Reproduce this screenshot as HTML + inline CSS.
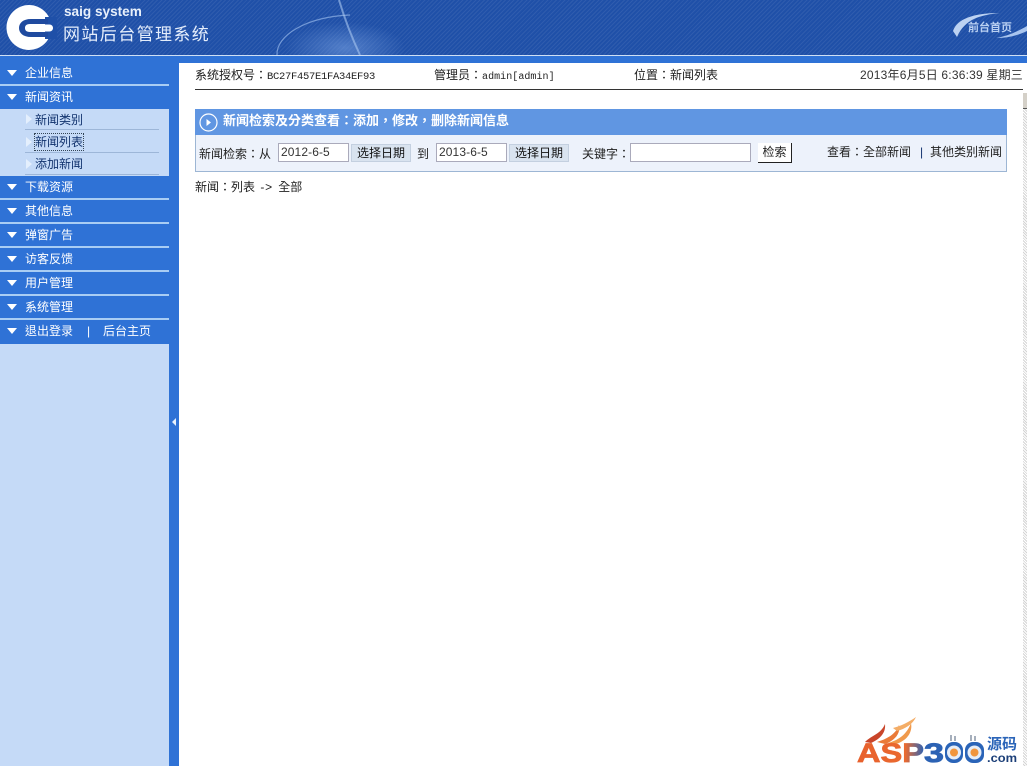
<!DOCTYPE html>
<html lang="zh-Hant">
<head>
<meta charset="utf-8">
<title>网站后台管理系统</title>
<style>
html,body{margin:0;padding:0;width:1027px;height:766px;overflow:hidden;background:#fff}
body{position:relative;font:12px/16px "Liberation Sans","Noto Sans CJK TC",sans-serif;color:#222}
.a{position:absolute;white-space:nowrap}
#hd{left:0;top:0;width:1027px;height:55px;background:#1f50a8;background-image:repeating-linear-gradient(135deg,rgba(255,255,255,.07) 0 1px,transparent 1px 3px)}
#wl{left:0;top:55px;width:1027px;height:1px;background:#cfe0f5}
#bl{left:0;top:56px;width:1027px;height:7px;background:#2f72d6}
#sb{left:0;top:63px;width:169px;height:703px;background:#c5daf7}
#st{left:169px;top:63px;width:10px;height:703px;background:#2f72d6}
.m{position:absolute;left:0;width:169px;height:22px;background:#2f72d6;color:#fff;line-height:22px;border-bottom:2px solid #a9cdf4}
.m span{position:absolute;left:25px;top:0}
.m i{position:absolute;left:7px;top:8px;width:0;height:0;border-left:5px solid transparent;border-right:5px solid transparent;border-top:6px solid #fff}
.s{position:absolute;left:25px;width:134px;height:21px;border-bottom:1px solid #9db6d8;color:#12336e;line-height:16px}
.s span{position:absolute;left:10px}
.s i{position:absolute;left:1px;top:6px;width:0;height:0;border-top:5px solid transparent;border-bottom:5px solid transparent;border-left:6px solid #e4effd}
.in{position:absolute;box-sizing:border-box;height:19px;border:1px solid #aab;background:#fff;color:#333;padding-left:2px;line-height:17px;letter-spacing:.1px}
.bt{position:absolute;box-sizing:border-box;height:18px;background:#d9e3ef;border:1px solid #c4d0e0;color:#111;text-align:center;line-height:16px}
</style>
</head>
<body>
<div class="a" id="hd"></div>
<svg class="a" style="left:0;top:0" width="1027" height="56" viewBox="0 0 1027 56">
  <defs>
    <radialGradient id="gl" cx="50%" cy="50%" r="50%"><stop offset="0" stop-color="#7ba4e4" stop-opacity=".55"/><stop offset="1" stop-color="#7ba4e4" stop-opacity="0"/></radialGradient>
  </defs>
  <ellipse cx="345" cy="48" rx="60" ry="26" fill="url(#gl)"/>
  <path d="M277 55C276 36 305 17 350 15" fill="none" stroke="#9dbdec" stroke-width="1.200" opacity=".65"/>
  <path d="M339 0C345 20 352 38 360 55" fill="none" stroke="#a8c6f0" stroke-width="2" opacity=".6"/>
  <circle cx="29" cy="27.500" r="22.500" fill="#fff"/>
  <rect x="45" y="17" width="12" height="22" fill="#1f50a8"/>
  <path d="M48 19H31C23 19 19 23 19 28C19 33 23 37 31 37H48V32H30C26 32 25 30 25 28C25 26 26 24 30 24H48Z" fill="#1f4a9f"/>
  <path d="M30 24.500H49.500C51.500 24.500 53 26 53 28C53 30 51.500 31.500 49.500 31.500H30Z" fill="#fff"/>
  <path d="M953 31C957 19 973 13 1000 13C980 15 965 19 957 37Z" fill="#bcd2f2"/>
  <path d="M996 38C1009 36 1020 30 1027 26V31C1017 36 1006 38 996 38Z" fill="#a9c5ef"/>
</svg>
<div class="a" style="left:64px;top:4px;font:bold 13.600px/16px 'Liberation Sans',sans-serif;color:#e8f0fb">saig system</div>
<div class="a" style="left:63px;top:24px;font-size:17px;line-height:21px;letter-spacing:1.400px;color:#e4edfb">网站后台管理系统</div>
<div class="a" style="left:968px;top:21px;font-size:11px;line-height:14px;font-weight:bold;color:#b9d0f2">前台首页</div>
<div class="a" id="wl"></div>
<div class="a" id="bl"></div>
<div class="a" id="sb"></div>
<div class="a" id="st"></div>
<svg class="a" style="left:171px;top:418px" width="6" height="8"><path d="M1 4L5 0V8Z" fill="#e6f0fc"/></svg>

<div class="m" style="top:62px"><i></i><span>企业信息</span></div>
<div class="m" style="top:86px;height:23px;border-bottom:0"><i></i><span>新闻资讯</span></div>
<div class="s" style="top:108px"><i></i><span style="top:4px">新闻类别</span></div>
<div class="s" style="top:131px"><i></i><span style="top:3px;outline:1px dotted #345">新闻列表</span></div>
<div class="s" style="top:153px"><i></i><span style="top:3px">添加新闻</span></div>
<div class="m" style="top:176px"><i></i><span>下载资源</span></div>
<div class="m" style="top:200px"><i></i><span>其他信息</span></div>
<div class="m" style="top:224px"><i></i><span>弹窗广告</span></div>
<div class="m" style="top:248px"><i></i><span>访客反馈</span></div>
<div class="m" style="top:272px"><i></i><span>用户管理</span></div>
<div class="m" style="top:296px"><i></i><span>系统管理</span></div>
<div class="m" style="top:320px;border-bottom:0;height:24px"><i></i><span>退出登录</span><span style="left:87px">|</span><span style="left:103px">后台主页</span></div>

<div class="a" style="left:195px;top:67px">系统授权号：<span style="font:10.500px/16px 'Liberation Mono',monospace;letter-spacing:-.3px">BC27F457E1FA34EF93</span></div>
<div class="a" style="left:434px;top:67px">管理员：<span style="font:10px/16px 'Liberation Mono',monospace;letter-spacing:.05px">admin[admin]</span></div>
<div class="a" style="left:634px;top:67px">位置：新闻列表</div>
<div class="a" style="right:4px;top:67px;letter-spacing:.2px;color:#333">2013年6月5日 6:36:39 星期三</div>
<div class="a" style="left:195px;top:89px;width:828px;height:1px;background:#333"></div>

<div class="a" style="left:1023px;top:93px;width:4px;height:673px;background:#e4e4e4;background-image:repeating-linear-gradient(45deg,#fff 0 1px,#d4d4d4 1px 2px)"></div>
<div class="a" style="left:1023px;top:93px;width:4px;height:16px;background:#d4d0c8;border-bottom:1px solid #555;box-sizing:border-box"></div>

<div class="a" style="left:195px;top:109px;width:812px;height:26px;background:#6096e2"></div>
<svg class="a" style="left:199px;top:113px" width="19" height="19"><circle cx="9.500" cy="9.500" r="8.500" fill="none" stroke="#fff" stroke-width="1.200"/><path d="M7.500 6L12 9.500L7.500 13Z" fill="#fff"/></svg>
<div class="a" style="left:223px;top:113px;color:#fff;font-weight:bold;font-size:13px">新闻检索及分类查看：添加，修改，删除新闻信息</div>
<div class="a" style="left:195px;top:135px;width:812px;height:37px;box-sizing:border-box;background:#edf2fb;border:1px solid #9db6d4;border-top:0"></div>

<div class="a" style="left:199px;top:146px">新闻检索：从</div>
<div class="in" style="left:278px;top:143px;width:71px">2012-6-5</div>
<div class="bt" style="left:351px;top:144px;width:60px">选择日期</div>
<div class="a" style="left:417px;top:146px">到</div>
<div class="in" style="left:436px;top:143px;width:71px">2013-6-5</div>
<div class="bt" style="left:509px;top:144px;width:60px">选择日期</div>
<div class="a" style="left:582px;top:146px">关键字：</div>
<div class="in" style="left:630px;top:143px;width:121px"></div>
<div class="a" style="left:758px;top:143px;width:34px;height:20px;box-sizing:border-box;border-right:1px solid #222;border-bottom:1px solid #222;text-align:center;line-height:18px;background:#fff">检索</div>
<div class="a" style="left:827px;top:144px">查看：全部新闻</div>
<div class="a" style="left:920px;top:144px;color:#12336e">|</div>
<div class="a" style="left:930px;top:144px">其他类别新闻</div>

<div class="a" style="left:195px;top:179px;word-spacing:2px">新闻：列表 <span style="letter-spacing:.8px">-&gt;</span> 全部</div>

<svg class="a" style="left:855px;top:712px" width="168" height="54" viewBox="0 0 168 54">
  <defs>
    <linearGradient id="lg" x1="0" y1="0" x2="1" y2="0"><stop offset="0" stop-color="#e8602c"/><stop offset=".72" stop-color="#ea6a30"/><stop offset="1" stop-color="#2c62b4"/></linearGradient>
  </defs>
  <path d="M10 30C17 23 26 22 30 12C31 21 25 27 16 31Z" fill="#c9452a"/>
  <path d="M22 30C32 27 41 22 44 13C46 22 39 29 30 32Z" fill="#ea7a38"/>
  <path d="M33 31C44 28 52 22 56 11C58 21 51 29 41 32Z" fill="#f09a4c"/>
  <path d="M38 16C46 14 54 10 61 5C58 12 50 17 42 19Z" fill="#f4ad66"/>
  <text x="2" y="50" font-family="'Liberation Sans',sans-serif" font-size="27" font-weight="700" textLength="67" lengthAdjust="spacingAndGlyphs" fill="url(#lg)" stroke="url(#lg)" stroke-width=".8">ASP</text>
  <text x="69" y="50" font-family="'Liberation Sans',sans-serif" font-size="27" font-weight="700" textLength="20" lengthAdjust="spacingAndGlyphs" fill="#2c62b4" stroke="#2c62b4" stroke-width=".8">3</text>
  <rect x="90" y="30" width="18" height="21" rx="8" fill="#2a64b8"/><circle cx="99" cy="40.500" r="7" fill="#e6edf7"/><circle cx="99" cy="40.500" r="4" fill="#f0953c"/>
  <rect x="110" y="30" width="19" height="21" rx="8" fill="#2a64b8"/><circle cx="119.500" cy="40.500" r="7" fill="#e6edf7"/><circle cx="119.500" cy="40.500" r="4" fill="#f0953c"/>
  <path d="M96 29V23M100 29V24M116 29V23M120 29V24" stroke="#6b7a90" stroke-width="1.200"/>
  <text x="132" y="37" font-family="'Noto Sans CJK SC',sans-serif" font-size="15" font-weight="700" fill="#2a64b8">源码</text>
  <text x="132" y="50" font-family="'Liberation Sans',sans-serif" font-size="12" font-weight="700" textLength="30" lengthAdjust="spacingAndGlyphs" fill="#1c3f78">.com</text>
</svg>
</body>
</html>
